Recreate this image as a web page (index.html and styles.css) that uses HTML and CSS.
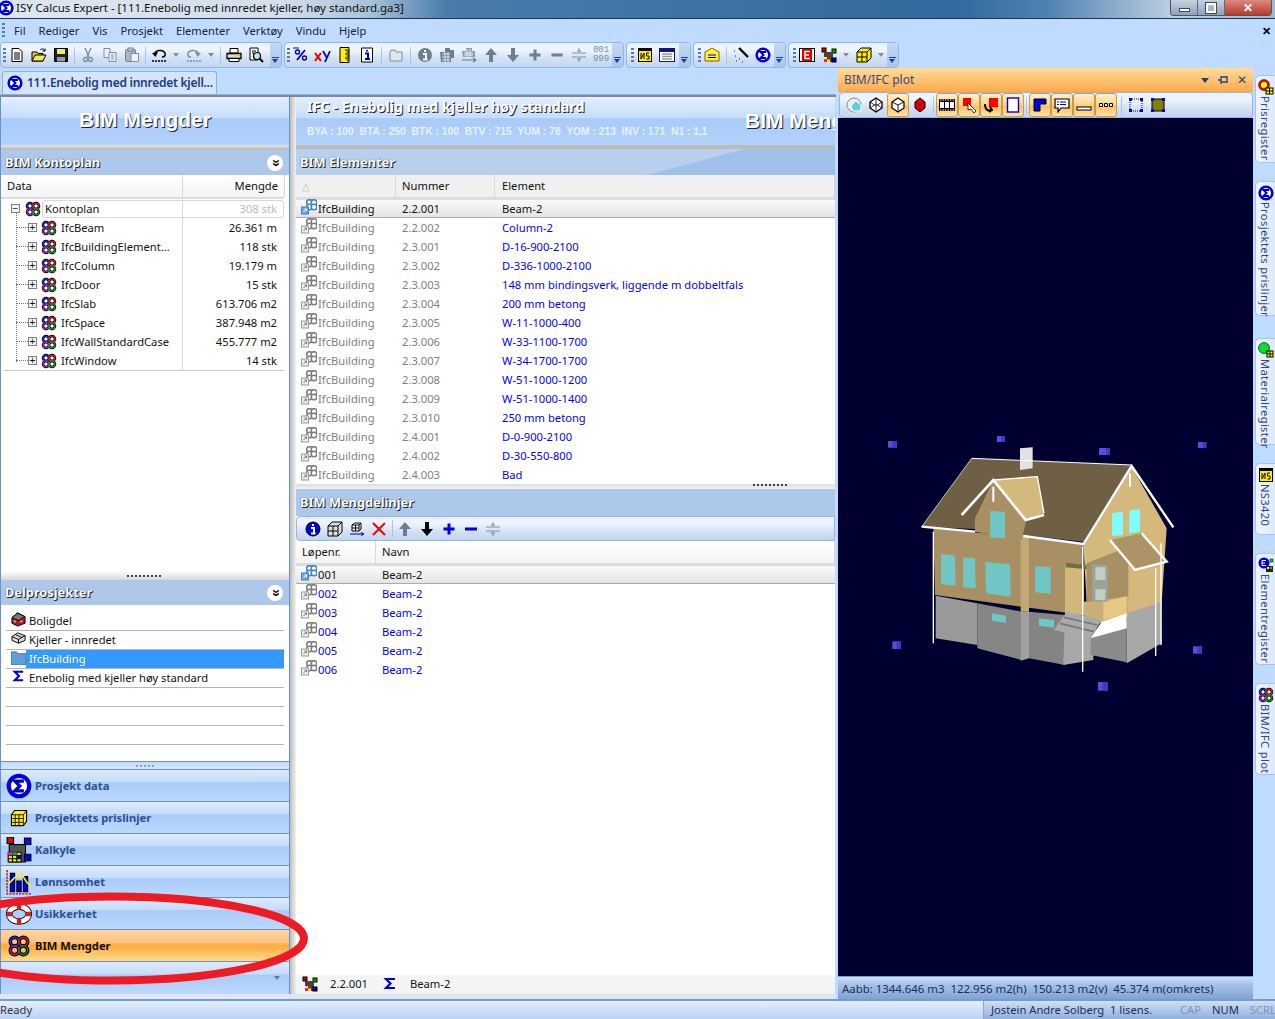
FILE: index.html
```html
<!DOCTYPE html>
<html lang="no">
<head>
<meta charset="utf-8">
<title>ISY Calcus Expert</title>
<link rel="stylesheet" href="styles.css">
</head>
<body>
<svg class="defs" width="0" height="0">
<defs>
<symbol id="sigma" viewBox="0 0 16 16"><circle cx="8" cy="8" r="6.3" fill="#fff" stroke="#0000e0" stroke-width="2.6"/><path d="M11 5H5.5L8.5 8 5.5 11H11" fill="none" stroke="#0000c0" stroke-width="2"/></symbol>
<symbol id="sigmas" viewBox="0 0 16 16"><path d="M13 3H4L8.5 7.5 4 12H13" fill="none" stroke="#0000e0" stroke-width="2.2"/></symbol>
<symbol id="bim" viewBox="0 0 16 16"><g fill="none" stroke="#000" stroke-width="2.5"><circle cx="5" cy="5" r="3"/><circle cx="11" cy="5" r="3"/><circle cx="5" cy="11" r="3"/><circle cx="11" cy="11" r="3"/></g><g fill="none" stroke-width="1.1"><circle cx="5" cy="5" r="3" stroke="#2030e0"/><circle cx="11" cy="5" r="3" stroke="#e02020"/><circle cx="5" cy="11" r="3" stroke="#c020c0"/><circle cx="11" cy="11" r="3" stroke="#10a020"/></g></symbol>
<symbol id="bimn" viewBox="-1 -1 18 18"><g fill="none" stroke="#000" stroke-width="2.5"><circle cx="5" cy="5" r="3"/><circle cx="11" cy="5" r="3"/><circle cx="5" cy="11" r="3"/><circle cx="11" cy="11" r="3"/></g><g fill="none" stroke-width="1.1"><circle cx="5" cy="5" r="3" stroke="#2030e0"/><circle cx="11" cy="5" r="3" stroke="#c02020"/><circle cx="5" cy="11" r="3" stroke="#a020a0"/><circle cx="11" cy="11" r="3" stroke="#108020"/></g></symbol>
<symbol id="bimg" viewBox="0 0 16 16"><g fill="#fff" stroke="#7d7d7d" stroke-width="1.5"><circle cx="8.500" cy="3.500" r="2.800"/><circle cx="13" cy="3.500" r="2.800"/><circle cx="8.500" cy="8" r="2.800"/><circle cx="13" cy="8" r="2.800"/></g><rect x=".5" y="8" width="7" height="7" fill="#eee" stroke="#999"/><path d="M2.500 13L5.500 10M3.500 10H5.500V12" fill="none" stroke="#777"/></symbol>
<symbol id="bims" viewBox="0 0 16 16"><g fill="#fff" stroke="#3f83c4" stroke-width="1.5"><circle cx="8.500" cy="3.500" r="2.800"/><circle cx="13" cy="3.500" r="2.800"/><circle cx="8.500" cy="8" r="2.800"/><circle cx="13" cy="8" r="2.800"/></g><rect x=".5" y="8" width="7" height="7" fill="#6ea8e0" stroke="#3f83c4"/><path d="M2.500 13L5.500 10M3.500 10H5.500V12" fill="none" stroke="#fff"/></symbol>
<symbol id="new" viewBox="0 0 16 16"><path d="M3 1.5H10L13 4.5V14.5H3Z" fill="#fff" stroke="#000"/><path d="M5 6H11M5 8H11M5 10H11M5 12H11" stroke="#000"/></symbol>
<symbol id="open" viewBox="0 0 16 16"><path d="M1 5H6L7 6.500H12V14H1Z" fill="#e0d040" stroke="#000"/><path d="M1 14L4 8H15L12 14Z" fill="#f2e65a" stroke="#000"/><path d="M9 3C11 1 13 2 14 4M14 4V1.500M14 4H11.500" fill="none" stroke="#000"/></symbol>
<symbol id="save" viewBox="0 0 16 16"><path d="M1.500 1.500H14.500V14.500H1.500Z" fill="#222" stroke="#000"/><rect x="4" y="2" width="8" height="5" fill="#f0e870"/><rect x="4" y="10" width="8" height="4.500" fill="#999"/></symbol>
<symbol id="cut" viewBox="0 0 16 16"><path d="M5 1L9 10M11 1L7 10" stroke="#7c8ea6" fill="none" stroke-width="1.400"/><circle cx="5.500" cy="12.500" r="2" fill="none" stroke="#7c8ea6" stroke-width="1.300"/><circle cx="10.500" cy="12.500" r="2" fill="none" stroke="#7c8ea6" stroke-width="1.300"/></symbol>
<symbol id="copy" viewBox="0 0 16 16"><path d="M2 1.500H8V10.500H2Z" fill="#eef2f8" stroke="#7c8ea6"/><path d="M7 5.500H14V14.500H7Z" fill="#eef2f8" stroke="#7c8ea6"/><path d="M9 8H12M9 10H12M9 12H12" stroke="#7c8ea6"/></symbol>
<symbol id="paste" viewBox="0 0 16 16"><rect x="1.500" y="2.500" width="10" height="12" rx="1" fill="#aab6c8" stroke="#6c7e96"/><rect x="4" y="1" width="5" height="3" fill="#ccd" stroke="#6c7e96"/><path d="M7 6.500H14.500V14.500H7Z" fill="#eef2f8" stroke="#7c8ea6"/></symbol>
<symbol id="undo" viewBox="0 0 16 16"><path d="M4 7C4 3 12 2 14 6C15 9 13 10 11 10" fill="none" stroke="#000" stroke-width="1.500"/><path d="M1 6L7 5 4.500 10Z" fill="#000"/><path d="M1 14H15" stroke="#000" stroke-dasharray="2 1" stroke-width="1.500"/></symbol>
<symbol id="redo" viewBox="0 0 16 16"><path d="M12 7C12 3 4 2 2 6C1 9 3 10 5 10" fill="none" stroke="#7c8ea6" stroke-width="1.500"/><path d="M15 6L9 5 11.500 10Z" fill="#7c8ea6"/><path d="M1 14H15" stroke="#7c8ea6" stroke-dasharray="2 1" stroke-width="1.500"/></symbol>
<symbol id="print" viewBox="0 0 16 16"><path d="M4 1.500H12V6H4Z" fill="#fff" stroke="#000"/><path d="M1 6.500H15V11.500H1Z" fill="#d8d8d8" stroke="#000" stroke-width="1.300"/><path d="M3 11.500H13V14.500H3Z" fill="#fff" stroke="#000"/><path d="M11 8H14" stroke="#e8c000" stroke-width="1.500"/></symbol>
<symbol id="preview" viewBox="0 0 16 16"><path d="M2 1H10V13H2Z" fill="#fff" stroke="#000"/><path d="M4 4H8M4 6H6" stroke="#000"/><circle cx="9" cy="9" r="3.500" fill="#bfe4f5" stroke="#000" stroke-width="1.200"/><path d="M11.500 11.500L15 15" stroke="#000" stroke-width="2"/></symbol>
<symbol id="ruler" viewBox="0 0 16 16"><path d="M3 .5H12V15.500H3Z" fill="#ffef00" stroke="#000"/><path d="M8 3H12M9.500 5H12M8 7H12M9.500 9H12M8 11H12M9.500 13H12" stroke="#000"/></symbol>
<symbol id="idoc" viewBox="0 0 16 16"><path d="M2.500 1H13.500V15H2.500Z" fill="#fff" stroke="#000"/><path d="M8 3V4.500M6 6.500H9V11.500M6 12H11" stroke="#0000c0" stroke-width="2" fill="none"/></symbol>
<symbol id="folder" viewBox="0 0 16 16"><path d="M2 5V14H14V5H8L7 3H3Z" fill="#dfe6f0" stroke="#7c8ea6"/></symbol>
<symbol id="infog" viewBox="0 0 16 16"><circle cx="8" cy="8" r="7" fill="#6c7e96"/><path d="M8 3V5M6 7H9V12M6 12.500H10.500" stroke="#fff" stroke-width="2" fill="none"/></symbol>
<symbol id="info" viewBox="0 0 16 16"><circle cx="8" cy="8" r="7" fill="#0000e0" stroke="#000"/><path d="M8 3V5M6 7H9V12M6 12.500H10.500" stroke="#fff" stroke-width="2" fill="none"/></symbol>
<symbol id="cubesg" viewBox="0 0 16 16"><path d="M1 5H6V1H11V3H15V11H12V15H2Z" fill="#6c7e96"/><path d="M3 7H11M3 10H11M3 13H11M6 5V15M9 5V15" stroke="#dfe6f0"/></symbol>
<symbol id="cubesb" viewBox="0 0 16 16"><path d="M1 4H5V1H11V4H14V10H2Z" fill="#8c9cb2"/><path d="M3 6H12M3 8H12M6 2V10M9 2V10" stroke="#eef"/><path d="M1 13H14M12 11L15 13 12 15" fill="none" stroke="#6c7e96" stroke-width="1.200"/></symbol>
<symbol id="boxw" viewBox="0 0 16 16"><path d="M1 5L5 1H15V11L11 15H1Z" fill="#ddd" stroke="#000"/><path d="M1 5H11V15M6 5V15M1 10H11M11 5L15 1" fill="none" stroke="#000"/></symbol>
<symbol id="cubek" viewBox="0 0 16 16"><path d="M3 4L6 2H12V8L10 10H3Z" fill="#fff" stroke="#000"/><path d="M3 4H10V10M6.500 4V10M3 7H10M10 4L12 2" fill="none" stroke="#000"/><path d="M1 13H14M12 11.500L15 13 12 14.500" fill="none" stroke="#0000d0"/></symbol>
<symbol id="up" viewBox="0 0 16 16"><path d="M8 1L14 8H10V15H6V8H2Z" fill="#6c7e96"/></symbol>
<symbol id="down" viewBox="0 0 16 16"><path d="M8 15L14 8H10V1H6V8H2Z" fill="#6c7e96"/></symbol>
<symbol id="plus" viewBox="0 0 16 16"><path d="M6.500 2.500H9.500V6.500H13.500V9.500H9.500V13.500H6.500V9.500H2.500V6.500H6.500Z" fill="#6c7e96"/></symbol>
<symbol id="minus" viewBox="0 0 16 16"><rect x="2.500" y="6.500" width="11" height="3" fill="#6c7e96"/></symbol>
<symbol id="eq" viewBox="0 0 16 16"><path d="M1 6H15M1 10H15M8 1V5M8 11V15M6 3L8 5 10 3M6 13L8 11 10 13" stroke="#7c8ea6" fill="none"/></symbol>
<symbol id="downk" viewBox="0 0 16 16"><path d="M8 15L14 8H10V1H6V8H2Z" fill="#000"/></symbol>
<symbol id="plusb" viewBox="0 0 16 16"><path d="M6.500 2.500H9.500V6.500H13.500V9.500H9.500V13.500H6.500V9.500H2.500V6.500H6.500Z" fill="#0000e0"/></symbol>
<symbol id="minusb" viewBox="0 0 16 16"><rect x="2" y="6.500" width="12" height="3" fill="#0000e0"/></symbol>
<symbol id="delx" viewBox="0 0 16 16"><path d="M2 2L14 14M14 2L2 14" stroke="#e01010" stroke-width="2.200"/></symbol>
<symbol id="win" viewBox="0 0 16 16"><rect x=".5" y="1.500" width="15" height="13" fill="#fff" stroke="#0a1a80"/><rect x="1" y="2" width="14" height="3" fill="#0a1a80"/><path d="M3 7H13M3 9.500H13M3 12H13" stroke="#999" stroke-width="1.500"/></symbol>
<symbol id="mail" viewBox="0 0 16 16"><path d="M1 5L8 1 15 5V14H1Z" fill="#ffef30" stroke="#7a6a00"/><path d="M4 8H12M4 10.500H12" stroke="#0000a0"/></symbol>
<symbol id="wand" viewBox="0 0 16 16"><path d="M6 1L15 10" stroke="#000" stroke-width="2.400"/><path d="M2 9H3M6 12H7M3 14H4M1 4H2M9 15H10" stroke="#0a7ad0" stroke-width="1.500"/></symbol>
<symbol id="cubec" viewBox="0 0 16 16"><rect x="1" y="1" width="4" height="4" fill="#c00" stroke="#000"/><rect x="11" y="2" width="4" height="4" fill="#0a0" stroke="#000"/><rect x="3" y="5" width="9" height="10" fill="#444"/><rect x="3" y="10" width="3" height="2.500" fill="#ff0"/><rect x="6" y="10" width="3" height="2.500" fill="#e00"/><rect x="3" y="12.500" width="3" height="2.500" fill="#e0e"/><rect x="6" y="12.500" width="3" height="2.500" fill="#ff0"/><rect x="11" y="11" width="4" height="4" fill="#00d" stroke="#000"/></symbol>
<symbol id="box" viewBox="0 0 16 16"><path d="M1 5L5 1H15V11L11 15H1Z" fill="#ffef00" stroke="#000"/><path d="M1 5H11V15M6 5V15M1 10H11M11 5L15 1" fill="none" stroke="#000"/></symbol>
<symbol id="wire" viewBox="0 0 16 16"><path d="M8 1L14 5V11L8 15 2 11V5Z" fill="#fff" stroke="#000" stroke-width="1.300"/><path d="M2 5L8 9 14 5M8 9V15M8 1V7M2 11L8 7 14 11" fill="none" stroke="#000" stroke-width=".8"/></symbol>
<symbol id="solid" viewBox="0 0 16 16"><path d="M8 1L14 5V11L8 15 2 11V5Z" fill="#fff" stroke="#000" stroke-width="1.200"/><path d="M2 5L8 8 14 5M8 8V15" fill="none" stroke="#000" stroke-width=".9"/></symbol>
<symbol id="solidr" viewBox="0 0 16 16"><path d="M8 1L13 5V11L8 15 3 11V5Z" fill="#e00000" stroke="#000"/><path d="M3 5L8 8 13 5M8 8V15" fill="none" stroke="#600" stroke-width=".8"/></symbol>
<symbol id="house" viewBox="0 0 16 16"><circle cx="8" cy="8" r="7" fill="#e8eef5" stroke="#889"/><path d="M5 9L10 4 15 8V14H7Z" fill="#5fd0d8" stroke="#fff"/></symbol>
<symbol id="film" viewBox="0 0 16 16"><rect x="0" y="2" width="16" height="12" fill="#000"/><path d="M1 3H15M1 13H15" stroke="#fff" stroke-dasharray="1.500 1"/><rect x="1" y="5" width="4" height="6" fill="#fff"/><rect x="6" y="5" width="4" height="6" fill="#fff"/><rect x="11" y="5" width="4" height="6" fill="#fff"/></symbol>
<symbol id="redarrow" viewBox="0 0 16 16"><rect x="2" y="1" width="8" height="8" fill="#f00"/><path d="M7 6L15 14 13 16 10 12 7 13Z" fill="#fff" stroke="#000" stroke-width=".8"/></symbol>
<symbol id="redturn" viewBox="0 0 16 16"><rect x="6" y="1" width="9" height="9" fill="#f00"/><path d="M2 7C2 14 6 14 9 13M7 10L9 13 6 15" fill="none" stroke="#000" stroke-width="2"/></symbol>
<symbol id="page" viewBox="0 0 16 16"><rect x="2.500" y="1" width="11" height="14" fill="#fff" stroke="#0000e0" stroke-width="1.400"/></symbol>
<symbol id="ell" viewBox="0 0 16 16"><path d="M2 2H14V7H8V14H2Z" fill="#0000e0" stroke="#000"/></symbol>
<symbol id="note" viewBox="0 0 16 16"><path d="M1 2H15V11H7L4 15V11H1Z" fill="#fff" stroke="#000" stroke-width="1.200"/><path d="M3 5H5M6 5H12M3 7.500H5M6 7.500H12" stroke="#0000d0"/></symbol>
<symbol id="bar" viewBox="0 0 16 16"><rect x="1" y="10" width="14" height="3" fill="#fff" stroke="#000"/></symbol>
<symbol id="dots" viewBox="0 0 16 16"><path d="M1.500 6.500H4.500V9.500H1.500ZM6.500 6.500H9.500V9.500H6.500ZM11.500 6.500H14.500V9.500H11.500Z" fill="#fff" stroke="#000"/></symbol>
<symbol id="sel1" viewBox="0 0 16 16"><rect x="2" y="2" width="12" height="12" fill="none" stroke="#000" stroke-dasharray="1 1"/><path d="M1 1H4V4H1ZM12 1H15V4H12ZM1 12H4V15H1ZM12 12H15V15H12Z" fill="#0000e0"/></symbol>
<symbol id="sel2" viewBox="0 0 16 16"><rect x="2" y="2" width="12" height="12" fill="#808000" stroke="#000"/><path d="M1 1H4V4H1ZM12 1H15V4H12ZM1 12H4V15H1ZM12 12H15V15H12Z" fill="#0000e0"/></symbol>
<symbol id="cubey" viewBox="-4 -4 24 24"><path d="M1 5L4 1H15V11L12 15H1Z" fill="#ffef00" stroke="#000"/><path d="M1 5H12V15M4.500 5V15M8 5V15M1 8.500H12M1 12H12M12 5L15 1" fill="none" stroke="#000" stroke-width=".8"/></symbol>
<symbol id="kalk" viewBox="0 0 24 24"><rect x="1" y="0" width="6" height="6" fill="#d01010" stroke="#000"/><rect x="17" y="1" width="6" height="6" fill="#1010d0" stroke="#000"/><rect x="3" y="7" width="15" height="16" fill="#555" stroke="#000"/><path d="M2 14H14V23H2Z" fill="#ffe000" stroke="#000"/><path d="M2 17H14M2 20H14M6 14V23M10 14V23" stroke="#000"/><rect x="2" y="14" width="4" height="3" fill="#e020e0"/><rect x="6" y="14" width="4" height="3" fill="#00b000"/><rect x="10" y="17" width="4" height="3" fill="#0000d0"/><rect x="17" y="16" width="6" height="6" fill="#0000e0" stroke="#000"/></symbol>
<symbol id="chart" viewBox="0 0 24 24"><path d="M1 1V23H24" fill="none" stroke="#c00000" stroke-width="1.300" stroke-dasharray="2 1"/><path d="M4 4H8V21H4ZM10 11H14V21H10ZM16 7H20V21H16Z" fill="#0000e0" stroke="#000"/><path d="M2 14L8 8 14 4 19 12 23 16" fill="none" stroke="#ffef00" stroke-width="1.500"/></symbol>
<symbol id="ring" viewBox="0 0 24 24"><ellipse cx="12" cy="12" rx="9" ry="7" fill="none" stroke="#000" stroke-width="6"/><ellipse cx="12" cy="12" rx="9" ry="7" fill="none" stroke="#fff" stroke-width="4.500"/><path d="M12 2V8M12 16V22M1 12H6M18 12H23" stroke="#d02020" stroke-width="4"/></symbol>
<symbol id="price" viewBox="0 0 16 16"><circle cx="6" cy="6" r="5.500" fill="#e01010" stroke="#000" stroke-width=".5"/><circle cx="6" cy="6" r="3" fill="#ff0"/><rect x="8" y="9" width="7" height="6" fill="#ff0" stroke="#000"/><path d="M11.500 9V15M8 12H15" stroke="#000"/></symbol>
<symbol id="mat" viewBox="0 0 16 16"><circle cx="6" cy="6" r="5.500" fill="#00e030" stroke="#000" stroke-width=".6"/><rect x="9" y="9" width="6" height="6" fill="#ff0" stroke="#000"/><path d="M12 9V15M9 12H15" stroke="#000"/></symbol>
<symbol id="ele" viewBox="0 0 16 16"><circle cx="6" cy="6" r="5.500" fill="#0000e0"/><path d="M4 3.500H8M4 6H7M4 8.500H8M4 3.500V8.500" stroke="#fff"/><rect x="8" y="9" width="7" height="6" fill="#222"/><rect x="9" y="10" width="2" height="2" fill="#ff0"/><rect x="12" y="10" width="2" height="2" fill="#0d0"/><rect x="12" y="2" width="3" height="3" fill="#0d0" stroke="#000" stroke-width=".5"/></symbol>
<symbol id="nsicon" viewBox="0 0 16 16"><rect x="1" y="1" width="14" height="14" fill="#000"/><rect x="2" y="4" width="12" height="10" fill="#ffef00"/><path d="M4 6V12L7 6V12M12 6H9.500V9H12V12H9.500" fill="none" stroke="#000"/></symbol>
<symbol id="eicon" viewBox="0 0 16 16"><rect x=".5" y="1.500" width="15" height="13" fill="#fff" stroke="#000"/><rect x="3" y="2" width="10" height="12" fill="#e00000"/><path d="M11 4.500H6V11.500H11M6 8H10" fill="none" stroke="#fff" stroke-width="1.500"/></symbol>
<symbol id="pct" viewBox="0 0 16 16"><circle cx="4.500" cy="5" r="2" fill="none" stroke="#0000c0" stroke-width="1.400"/><circle cx="11.500" cy="11" r="2" fill="none" stroke="#0000c0" stroke-width="1.400"/><path d="M12 3L4 13" stroke="#0000c0" stroke-width="1.800"/><path d="M0 1H6" stroke="#0000c0"/></symbol>
<symbol id="xy" viewBox="0 0 18 16"><path d="M1 6L7 14M7 6L1 14" stroke="#e00000" stroke-width="2"/><path d="M9 4L13 11M16 4L11 15" stroke="#0000d0" stroke-width="1.800"/></symbol>
<symbol id="hus" viewBox="0 0 16 16"><path d="M1 6L7 1 15 5V12L7 15 1 12Z" fill="#c01818" stroke="#000"/><path d="M1 6L7 1 15 5 8 9Z" fill="#777" stroke="#000"/><rect x="3" y="9" width="2" height="2" fill="#9cf"/><rect x="10" y="9" width="2" height="2" fill="#9cf"/></symbol>
<symbol id="kjel" viewBox="0 0 16 16"><path d="M1 6L7 2 15 5V10L8 13 1 10Z" fill="#ddd" stroke="#000"/><path d="M1 6L8 9 15 5M8 9V13M5 4L12 7" fill="none" stroke="#000"/></symbol>
<symbol id="fold" viewBox="0 0 16 16"><path d="M0 2H6L7 4H16V16H0Z" fill="#5f9fd8" stroke="#3a6ea5"/></symbol>
</defs>
</svg>

<div class="app">
  <header class="titlebar">
    <svg class="ic"><use href="#sigma"/></svg>
    <span class="title-text">ISY Calcus Expert - [111.Enebolig med innredet kjeller, høy standard.ga3]</span>
    <div class="winbtns">
      <span class="wb wb-min"><i class="gl-min"></i></span>
      <span class="wb wb-max"><i class="gl-max"></i></span>
      <span class="wb wb-close">✕</span>
    </div>
  </header>

  <nav class="menubar">
    <span class="grip"></span>
    <span class="mi mi-fil">Fil</span><span class="mi">Rediger</span><span class="mi">Vis</span><span class="mi">Prosjekt</span><span class="mi">Elementer</span><span class="mi">Verktøy</span><span class="mi">Vindu</span><span class="mi">Hjelp</span>
    <span class="menu-close">✕</span>
  </nav>

  <div class="toolbars">
    <div class="tb tb1">
      <span class="grip"></span>
      <span class="b"><svg class="ic"><use href="#new"/></svg></span><span class="b"><svg class="ic"><use href="#open"/></svg></span><span class="b"><svg class="ic"><use href="#save"/></svg></span><span class="sep"></span>
      <span class="b"><svg class="ic"><use href="#cut"/></svg></span><span class="b"><svg class="ic"><use href="#copy"/></svg></span><span class="b"><svg class="ic"><use href="#paste"/></svg></span><span class="sep"></span>
      <span class="b bd"><svg class="ic"><use href="#undo"/></svg><i class="drop"></i></span><span class="b bd"><svg class="ic"><use href="#redo"/></svg><i class="drop"></i></span><span class="sep"></span>
      <span class="b"><svg class="ic"><use href="#print"/></svg></span><span class="b"><svg class="ic"><use href="#preview"/></svg></span>
      <span class="ovf"></span>
    </div>
    <div class="tb tb2">
      <span class="grip"></span>
      <span class="b"><svg class="ic"><use href="#pct"/></svg></span><span class="b"><svg class="ic ic-wide"><use href="#xy"/></svg></span><span class="b"><svg class="ic"><use href="#ruler"/></svg></span><span class="b"><svg class="ic"><use href="#idoc"/></svg></span><span class="sep"></span>
      <span class="b"><svg class="ic"><use href="#folder"/></svg></span><span class="sep"></span>
      <span class="b"><svg class="ic"><use href="#infog"/></svg></span><span class="b"><svg class="ic"><use href="#cubesg"/></svg></span><span class="b"><svg class="ic"><use href="#cubesb"/></svg></span><span class="b"><svg class="ic"><use href="#up"/></svg></span><span class="b"><svg class="ic"><use href="#down"/></svg></span><span class="b"><svg class="ic"><use href="#plus"/></svg></span><span class="b"><svg class="ic"><use href="#minus"/></svg></span><span class="b"><svg class="ic"><use href="#eq"/></svg></span>
      <span class="b num"><span>001</span><span>999</span></span>
      <span class="ovf"></span>
    </div>
    <div class="tb tb3">
      <span class="grip"></span>
      <span class="b"><svg class="ic"><use href="#nsicon"/></svg></span><span class="b"><svg class="ic"><use href="#win"/></svg></span>
      <span class="ovf"></span>
    </div>
    <div class="tb tb4">
      <span class="grip"></span>
      <span class="b"><svg class="ic"><use href="#mail"/></svg></span><span class="sep"></span><span class="b"><svg class="ic"><use href="#wand"/></svg></span><span class="b"><svg class="ic"><use href="#sigma"/></svg></span>
      <span class="ovf"></span>
    </div>
    <div class="tb tb5">
      <span class="grip"></span>
      <span class="b"><svg class="ic"><use href="#eicon"/></svg></span><span class="b bd"><svg class="ic"><use href="#cubec"/></svg><i class="drop"></i></span><span class="b bd"><svg class="ic"><use href="#box"/></svg><i class="drop"></i></span>
      <span class="ovf"></span>
    </div>
  </div>

  <div class="main">
    <div class="doc">
      <div class="tabstrip">
        <div class="doc-tab"><svg class="ic"><use href="#sigma"/></svg><span>111.Enebolig med innredet kjell...</span></div>
      </div>
      <div class="panes">
        <aside class="left">
          <div class="bighead bighead-l"><span class="big">BIM Mengder</span></div>
          <div class="band"></div>
          <div class="sechead"><span>BIM Kontoplan</span><i class="chev">»</i></div>
          <div class="thead tree-cols"><span>Data</span><span class="r">Mengde</span></div>
          <div class="tree">
            <div class="trow root"><span class="exp">−</span><svg class="ic"><use href="#bim"/></svg><span class="tname">Kontoplan</span><span class="tval muted">308 stk</span></div>
            <div class="trow"><span class="exp">+</span><svg class="ic"><use href="#bim"/></svg><span class="tname">IfcBeam</span><span class="tval">26.361 m</span></div>
            <div class="trow"><span class="exp">+</span><svg class="ic"><use href="#bim"/></svg><span class="tname">IfcBuildingElement...</span><span class="tval">118 stk</span></div>
            <div class="trow"><span class="exp">+</span><svg class="ic"><use href="#bim"/></svg><span class="tname">IfcColumn</span><span class="tval">19.179 m</span></div>
            <div class="trow"><span class="exp">+</span><svg class="ic"><use href="#bim"/></svg><span class="tname">IfcDoor</span><span class="tval">15 stk</span></div>
            <div class="trow"><span class="exp">+</span><svg class="ic"><use href="#bim"/></svg><span class="tname">IfcSlab</span><span class="tval">613.706 m2</span></div>
            <div class="trow"><span class="exp">+</span><svg class="ic"><use href="#bim"/></svg><span class="tname">IfcSpace</span><span class="tval">387.948 m2</span></div>
            <div class="trow"><span class="exp">+</span><svg class="ic"><use href="#bim"/></svg><span class="tname">IfcWallStandardCase</span><span class="tval">455.777 m2</span></div>
            <div class="trow"><span class="exp">+</span><svg class="ic"><use href="#bim"/></svg><span class="tname">IfcWindow</span><span class="tval">14 stk</span></div>
          </div>
          <div class="fill"></div>
          <div class="split"><i class="dots9"></i></div>
          <div class="sechead"><span>Delprosjekter</span><i class="chev">»</i></div>
          <div class="dlist">
            <div class="drow"><svg class="ic"><use href="#hus"/></svg><span>Boligdel</span></div>
            <div class="drow"><svg class="ic"><use href="#kjel"/></svg><span>Kjeller - innredet</span></div>
            <div class="drow on"><svg class="ic"><use href="#fold"/></svg><span>IfcBuilding</span></div>
            <div class="drow"><svg class="ic"><use href="#sigmas"/></svg><span>Enebolig med kjeller høy standard</span></div>
            <div class="drow"></div>
            <div class="drow"></div>
            <div class="drow"></div>
          </div>
          <div class="split2"><i class="dots5"></i></div>
          <div class="nav">
            <div class="navb"><svg class="ic24"><use href="#sigma"/></svg><span>Prosjekt data</span></div>
            <div class="navb"><svg class="ic24"><use href="#cubey"/></svg><span>Prosjektets prislinjer</span></div>
            <div class="navb"><svg class="ic24"><use href="#kalk"/></svg><span>Kalkyle</span></div>
            <div class="navb"><svg class="ic24"><use href="#chart"/></svg><span>Lønnsomhet</span></div>
            <div class="navb"><svg class="ic24"><use href="#ring"/></svg><span>Usikkerhet</span></div>
            <div class="navb act"><svg class="ic24"><use href="#bimn"/></svg><span>BIM Mengder</span></div>
            <div class="navb last"><i class="navdrop"></i></div>
          </div>
        </aside>
        <div class="vsplit"></div>
        <section class="center">
          <div class="bighead chead">
            <div class="chead-l">
              <div class="ctitle">IFC - Enebolig med kjeller høy standard</div>
              <div class="cstats">BYA : 100&nbsp; BTA : 250&nbsp; BTK : 100&nbsp; BTV : 715&nbsp; YUM : 78&nbsp; YOM : 213&nbsp; INV : 171&nbsp; N1 : 1,1</div>
            </div>
            <span class="big bigc">BIM Mengder</span>
          </div>
          <div class="sechead sechead-c"><span>BIM Elementer</span></div>
          <div class="thead el-cols grey"><span class="sort">△</span><span>Nummer</span><span>Element</span></div>
          <div class="rows">
            <div class="row el-cols sel"><svg class="ic"><use href="#bims"/></svg><span>IfcBuilding</span><span>2.2.001</span><span>Beam-2</span></div>
            <div class="row el-cols"><svg class="ic"><use href="#bimg"/></svg><span class="g">IfcBuilding</span><span class="g">2.2.002</span><span class="l">Column-2</span></div>
            <div class="row el-cols"><svg class="ic"><use href="#bimg"/></svg><span class="g">IfcBuilding</span><span class="g">2.3.001</span><span class="l">D-16-900-2100</span></div>
            <div class="row el-cols"><svg class="ic"><use href="#bimg"/></svg><span class="g">IfcBuilding</span><span class="g">2.3.002</span><span class="l">D-336-1000-2100</span></div>
            <div class="row el-cols"><svg class="ic"><use href="#bimg"/></svg><span class="g">IfcBuilding</span><span class="g">2.3.003</span><span class="l">148 mm bindingsverk, liggende m dobbeltfals</span></div>
            <div class="row el-cols"><svg class="ic"><use href="#bimg"/></svg><span class="g">IfcBuilding</span><span class="g">2.3.004</span><span class="l">200 mm betong</span></div>
            <div class="row el-cols"><svg class="ic"><use href="#bimg"/></svg><span class="g">IfcBuilding</span><span class="g">2.3.005</span><span class="l">W-11-1000-400</span></div>
            <div class="row el-cols"><svg class="ic"><use href="#bimg"/></svg><span class="g">IfcBuilding</span><span class="g">2.3.006</span><span class="l">W-33-1100-1700</span></div>
            <div class="row el-cols"><svg class="ic"><use href="#bimg"/></svg><span class="g">IfcBuilding</span><span class="g">2.3.007</span><span class="l">W-34-1700-1700</span></div>
            <div class="row el-cols"><svg class="ic"><use href="#bimg"/></svg><span class="g">IfcBuilding</span><span class="g">2.3.008</span><span class="l">W-51-1000-1200</span></div>
            <div class="row el-cols"><svg class="ic"><use href="#bimg"/></svg><span class="g">IfcBuilding</span><span class="g">2.3.009</span><span class="l">W-51-1000-1400</span></div>
            <div class="row el-cols"><svg class="ic"><use href="#bimg"/></svg><span class="g">IfcBuilding</span><span class="g">2.3.010</span><span class="l">250 mm betong</span></div>
            <div class="row el-cols"><svg class="ic"><use href="#bimg"/></svg><span class="g">IfcBuilding</span><span class="g">2.4.001</span><span class="l">D-0-900-2100</span></div>
            <div class="row el-cols"><svg class="ic"><use href="#bimg"/></svg><span class="g">IfcBuilding</span><span class="g">2.4.002</span><span class="l">D-30-550-800</span></div>
            <div class="row el-cols"><svg class="ic"><use href="#bimg"/></svg><span class="g">IfcBuilding</span><span class="g">2.4.003</span><span class="l">Bad</span></div>
          </div>
          <div class="hsplit"><i class="dots9"></i></div>
          <div class="sechead sechead-m"><span>BIM Mengdelinjer</span></div>
          <div class="tb tb-m">
            <span class="b"><svg class="ic"><use href="#info"/></svg></span><span class="b"><svg class="ic"><use href="#boxw"/></svg></span><span class="b"><svg class="ic"><use href="#cubek"/></svg></span><span class="b"><svg class="ic"><use href="#delx"/></svg></span><span class="sep"></span>
            <span class="b"><svg class="ic"><use href="#up"/></svg></span><span class="b"><svg class="ic"><use href="#downk"/></svg></span><span class="b"><svg class="ic"><use href="#plusb"/></svg></span><span class="b"><svg class="ic"><use href="#minusb"/></svg></span><span class="b"><svg class="ic"><use href="#eq"/></svg></span>
          </div>
          <div class="thead ml-cols"><span>Løpenr.</span><span>Navn</span></div>
          <div class="rows">
            <div class="row ml-cols sel"><svg class="ic"><use href="#bims"/></svg><span>001</span><span>Beam-2</span></div>
            <div class="row ml-cols"><svg class="ic"><use href="#bimg"/></svg><span class="l">002</span><span class="l">Beam-2</span></div>
            <div class="row ml-cols"><svg class="ic"><use href="#bimg"/></svg><span class="l">003</span><span class="l">Beam-2</span></div>
            <div class="row ml-cols"><svg class="ic"><use href="#bimg"/></svg><span class="l">004</span><span class="l">Beam-2</span></div>
            <div class="row ml-cols"><svg class="ic"><use href="#bimg"/></svg><span class="l">005</span><span class="l">Beam-2</span></div>
            <div class="row ml-cols"><svg class="ic"><use href="#bimg"/></svg><span class="l">006</span><span class="l">Beam-2</span></div>
          </div>
          <div class="fill"></div>
          <div class="cfoot"><svg class="ic"><use href="#cubec"/></svg><span class="cf1">2.2.001</span><svg class="ic"><use href="#sigmas"/></svg><span class="cf2">Beam-2</span></div>
        </section>
      </div>
    </div>

    <section class="plot">
      <div class="plot-title"><span>BIM/IFC plot</span>
        <div class="plot-ctrl"><i class="tri"></i><svg class="pin" viewBox="0 0 12 12"><path d="M1 6H4M4 2V10M4 3H10V8H4M10 2V9" fill="none" stroke="#233f8c" stroke-width="1.300"/></svg><span class="px">✕</span></div>
      </div>
      <div class="tb tb-p">
        <span class="b"><svg class="ic"><use href="#house"/></svg></span><span class="b"><svg class="ic"><use href="#wire"/></svg></span><span class="b a"><svg class="ic"><use href="#solid"/></svg></span><span class="b"><svg class="ic"><use href="#solidr"/></svg></span><span class="sep"></span>
        <span class="b a"><svg class="ic"><use href="#film"/></svg></span><span class="b a"><svg class="ic"><use href="#redarrow"/></svg></span><span class="b a"><svg class="ic"><use href="#redturn"/></svg></span><span class="b a"><svg class="ic"><use href="#page"/></svg></span><span class="sep"></span>
        <span class="b a"><svg class="ic"><use href="#ell"/></svg></span><span class="b a"><svg class="ic"><use href="#note"/></svg></span><span class="b a"><svg class="ic"><use href="#bar"/></svg></span><span class="b a"><svg class="ic"><use href="#dots"/></svg></span><span class="sep sep-wide"></span>
        <span class="b"><svg class="ic"><use href="#sel1"/></svg></span><span class="b"><svg class="ic"><use href="#sel2"/></svg></span>
      </div>
      <div class="view">
        <svg class="house3d" viewBox="0 0 990 810" width="330" height="270">
          <g fill="#5050dd"><rect x="24" y="33" width="27" height="20"/><rect x="351" y="18" width="24" height="18"/><rect x="657" y="54" width="33" height="21"/><rect x="954" y="36" width="25" height="18"/><rect x="37" y="634" width="26" height="23"/><rect x="939" y="649" width="27" height="22"/><rect x="654" y="756" width="30" height="26"/></g>
          <g fill="#3c3cc0"><rect x="37" y="33" width="14" height="20"/><rect x="363" y="18" width="12" height="18"/><rect x="678" y="54" width="12" height="21"/><rect x="968" y="36" width="11" height="18"/><rect x="50" y="634" width="13" height="23"/><rect x="952" y="649" width="14" height="22"/><rect x="668" y="756" width="16" height="26"/></g>
          <path d="M167 497L292 520V645L167 625Z" fill="#9a9a9a"/>
          <path d="M292 520L425 545V690L292 655Z" fill="#868686"/>
          <path d="M422 545H447V685L422 692Z" fill="#a0a0a0"/>
          <path d="M447 545L555 555V705L447 685Z" fill="#848484"/>
          <path d="M555 555L640 560V690L550 705Z" fill="#a8a8a8"/>
          <path d="M632 600L740 580V697L632 675Z" fill="#8a8a8a"/>
          <path d="M740 545L845 510V640L740 700Z" fill="#a8a8a8"/>
          <path d="M160 295L610 340V555L165 495Z" fill="#a89064"/>
          <path d="M555 400L612 405V555H555Z" fill="#d2b77c"/>
          <path d="M422 275L447 290V545H422Z" fill="#c4a873"/>
          <path d="M610 345L755 110 860 295 845 515 740 550V500L620 515Z" fill="#d4b87c"/>
          <path d="M612 515L745 498V560L665 580 612 560Z" fill="#c9ae75"/>
          <path d="M620 400L745 350V500L620 515Z" fill="#a89064"/>
          <path d="M670 515L740 498V550L670 570Z" fill="#e6c887"/>
          <path d="M557 398L620 405V418L557 412Z" fill="#6f7040"/>
          <path d="M125 290L275 85 755 105 610 335 430 315 285 297Z" fill="#6e5f45"/>
          <path d="M285 265L340 150 440 265 425 330 285 305Z" fill="#a89064"/>
          <path d="M340 150L472 140 492 250 435 270Z" fill="#d4b87c"/>
          <path d="M690 330L785 310 860 395 765 420Z" fill="#ad9466"/>
          <path d="M635 403L683 405V515L637 515Z" fill="#9aa59a"/>
          <path d="M646 412H676V450H646ZM646 478H676V510H646Z" fill="#c4ccc4"/>
          <g fill="#6fc6c4"><path d="M330 243L375 245V325L330 322Z"/><path d="M183 372L225 377 227 467 183 462Z"/><path d="M250 382L285 385 287 475 250 472Z"/><path d="M316 396L390 403 392 500 318 490Z"/><path d="M466 408L512 412V491L466 487Z"/><path d="M336 550L378 557V579L336 572Z"/><path d="M477 565L522 570V593L477 587Z"/></g>
          <g fill="#7ffcfc"><path d="M696 250L729 244V315L696 318Z"/><path d="M749 240L780 237V305L747 310Z"/></g>
          <path d="M420 55L458 52V115L420 120Z" fill="#e2e2e2"/>
          <path d="M632 625L665 575 740 550V595Z" fill="#fff"/>
          <path d="M560 545L665 570 632 625 522 600Z" fill="#aaa"/>
          <path d="M552 562L652 585M540 580L642 605" stroke="#777" stroke-width="5" fill="none"/>
          <g fill="none" stroke="#fff" stroke-linejoin="miter">
            <path d="M125 290L285 305" stroke-width="7"/>
            <path d="M430 318L610 342 755 108 880 292" stroke-width="7"/>
            <path d="M275 85L755 105" stroke-width="3"/>
            <path d="M125 290L275 85" stroke-width="2"/>
            <path d="M245 255L340 150 437 270 492 255" stroke-width="8"/>
            <path d="M340 150L472 140 492 250" stroke-width="4"/>
            <path d="M690 330L765 420 860 395 785 310" stroke-width="7"/>
            <path d="M160 305V640M608 350V725M827 415V678M843 340V645" stroke-width="4"/>
            <path d="M340 170V215M750 130V170" stroke-width="6"/>
          </g>
        </svg>
      </div>
      <div class="plot-status">Aabb: 1344.646 m3&nbsp;&nbsp;122.956 m2(h)&nbsp;&nbsp;150.213 m2(v)&nbsp;&nbsp;45.374 m(omkrets)</div>
    </section>

    <aside class="vtabs">
      <div class="vt vt1"><svg class="ic"><use href="#price"/></svg><span>Prisregister</span></div>
      <div class="vt vt2"><svg class="ic"><use href="#sigma"/></svg><span>Prosjektets prislinjer</span></div>
      <div class="vt vt3"><svg class="ic"><use href="#mat"/></svg><span>Materialregister</span></div>
      <div class="vt vt4"><svg class="ic"><use href="#nsicon"/></svg><span>NS3420</span></div>
      <div class="vt vt5"><svg class="ic"><use href="#ele"/></svg><span>Elementregister</span></div>
      <div class="vt vt6"><svg class="ic"><use href="#bim"/></svg><span>BIM/IFC plot</span></div>
    </aside>
  </div>

  <footer class="statusbar">
    <span class="st-ready">Ready</span>
    <span class="st-user">Jostein Andre Solberg&nbsp; 1 lisens.</span>
    <span class="st-k dim">CAP</span><span class="st-k">NUM</span><span class="st-k dim">SCRL</span>
  </footer>

  <svg class="annot" viewBox="0 0 1275 1019" width="1275" height="1019"><ellipse cx="112" cy="938.500" rx="192" ry="42" fill="none" stroke="#ed1c24" stroke-width="8"/></svg>
</div>
</body>
</html>
```

FILE: styles.css
```css
* { box-sizing: border-box; }
html, body { margin: 0; padding: 0; }
body { width: 1275px; height: 1019px; overflow: hidden; font: 11.2px/1 "Noto Sans", Tahoma, sans-serif; color: #111; background: #bfdbff; }
.defs { position: absolute; }
.app { position: relative; width: 1275px; height: 1019px; display: flex; flex-direction: column; overflow: hidden; }
.ic { width: 16px; height: 16px; flex: none; display: block; }
.ic-wide { width: 18px; }
.ic24 { width: 26px; height: 26px; flex: none; display: block; }
.fill { flex: 1; min-height: 0; }

/* title bar */
.titlebar { height: 19px; flex: none; display: flex; align-items: center; padding-bottom: 2px; border-bottom: 1px solid #20324a; background: linear-gradient(90deg, #dde6f0 0, #d4dfec 22%, #a9c2da 29%, #4a7bab 35%, #34699f 75%, #4f81b2 82%, #bcd0e2 92%, #9fb8d0 100%); }
.titlebar .ic { margin-left: -2px; }
.title-text { margin-left: 2px; font-size: 11.450px; color: #111; }
.winbtns { margin-left: auto; margin-right: 3px; display: flex; height: 16px; align-self: flex-start; border: 1px solid #44576c; border-top: 0; border-radius: 0 0 4px 4px; overflow: hidden; }
.wb { display: flex; align-items: center; justify-content: center; background: linear-gradient(#c6d3e0, #8ba2ba); border-right: 1px solid #5b6f84; width: 27px; }
.wb-close { width: 46px; border: 0; color: #fff; font-size: 12px; font-weight: bold; background: linear-gradient(#d98a7e, #bb3a2a); }
.gl-min { width: 11px; height: 4px; margin-top: 5px; background: #fff; border: 1px solid #445; }
.gl-max { width: 10px; height: 10px; background: transparent; border: 2px solid #fff; outline: 1px solid #445; }

/* menu */
.menubar { height: 23px; flex: none; display: flex; align-items: center; background: #bfdbff; position: relative; }
.menubar .grip { margin: 0 0 0 2px; }
.mi { font-size: 11.2px; color: #15233c; margin-right: 13px; }
.mi-fil { margin-left: 9px; }
.menu-close { margin-left: auto; margin-right: 4px; font-size: 11px; color: #000; font-weight: bold; }
.grip { display: block; flex: none; width: 3px; height: 15px; margin: 0 0 0 2px; background: repeating-linear-gradient(#4f7dbd 0 2px, transparent 2px 4px); }

/* toolbars */
.toolbars { height: 26px; flex: none; display: flex; gap: 2px; background: #bfdbff; }
.tb { position: relative; display: flex; align-items: center; height: 26px; flex: none; background: linear-gradient(#e6f0fc 0, #f0f5fc 25%, #d2e0f3 65%, #c3d6ef 100%); border: 1px solid #94b6e4; border-radius: 4px; }
.tb1 { width: 282px; }
.tb2 { width: 340px; }
.tb3 { width: 65px; padding-left: 2px; }
.tb4 { width: 93px; padding-left: 2px; }
.tb5 { width: 111px; padding-left: 2px; }
.b { width: 22px; height: 24px; display: flex; flex: none; align-items: center; justify-content: center; }
.bd { width: 35px; justify-content: flex-start; padding-left: 3px; }
.drop { display: block; width: 0; height: 0; margin-left: 6px; border: 3px solid transparent; border-top: 4px solid #7c8ea6; border-bottom: 0; }
.sep { flex: none; width: 1px; height: 17px; margin: 0 2px; background: #a9c4e6; }
.tb2 .sep, .tb4 .sep { margin: 0 3px; }
.sep-wide { margin: 0 3px 0 4px; }
.num { flex-direction: column; font: 9px/9px "Liberation Mono", monospace; color: #7c8ea6; }
.ovf { position: absolute; right: 0; top: 0; bottom: 0; width: 11px; border-radius: 0 3px 3px 0; background: linear-gradient(#c3d8f3, #a9c6ea); }
.ovf::after { content: ""; position: absolute; left: 2px; bottom: 4px; width: 0; height: 0; border: 3.500px solid transparent; border-top: 4px solid #1c3f94; border-bottom: 0; }
.ovf::before { content: ""; position: absolute; left: 2px; bottom: 9px; width: 7px; height: 1px; background: #1c3f94; }

/* layout */
.main { flex: 1; min-height: 0; display: flex; }
.doc { width: 836px; flex: none; display: flex; flex-direction: column; }
.tabstrip { height: 27px; flex: none; padding: 3px 0 0 2px; background: #bfdbff; border-bottom: 1px solid #8fb0da; }
.doc-tab { width: 215px; height: 23px; display: flex; align-items: center; gap: 4px; padding-left: 4px; background: #d4e5fb; border: 1px solid #8fb0da; border-bottom: 0; border-radius: 3px 3px 0 0; color: #1c3a80; font-size: 12px; font-weight: 600; white-space: nowrap; letter-spacing: -.25px; }
.panes { flex: 1; min-height: 0; display: flex; border-top: 2px solid #7f8a96; border-bottom: 5px solid #dfe6ef; }
.left { width: 290px; flex: none; display: flex; flex-direction: column; background: #fff; border-left: 1px solid #6593cf; border-right: 1px solid #6593cf; }
.vsplit { width: 6px; flex: none; background: linear-gradient(90deg, #bbb, #d8d8d8 50%, #f0f0f0); }
.center { width: 539px; flex: none; display: flex; flex-direction: column; background: #fff; }

.bighead { height: 48px; flex: none; display: flex; align-items: center; justify-content: center; position: relative; background: linear-gradient(#e3eefe 0, #c6dcfb 44%, #a9cbf9 45%, #b3d2fb 100%); overflow: hidden; }
.bighead-l { padding-bottom: 4px; }
.big { font: bold 21px/1 "Liberation Sans", sans-serif; color: #fff; text-shadow: 1px 1px 0 #222; }
.band { height: 5px; flex: none; background: linear-gradient(#e8e8e8, #b3b3b3); }
.sechead { height: 25px; flex: none; display: flex; align-items: center; justify-content: space-between; padding: 0 6px 0 4px; background: #adc8ea; font-weight: bold; font-size: 12.800px; color: #fff; text-shadow: 1px 1px 0 #222, 0 0 1px #333; }
.chev { width: 16px; height: 16px; border-radius: 50%; background: #fff; color: #111; text-shadow: none; font: bold 14px/12px "Liberation Sans", sans-serif; text-align: center; transform: rotate(90deg); }
.thead { height: 24px; flex: none; display: grid; align-items: center; font-size: 11.2px; background: linear-gradient(#fff, #f4f4f4); border-bottom: 2px solid #dcdcdc; }
.tree-cols { grid-template-columns: 177px 102px; padding-left: 5px; width: 283px; }
.thead span { height: 100%; display: flex; align-items: center; border-right: 1px solid #d8d8d8; padding-left: 1px; }
.thead .r { justify-content: flex-end; padding-right: 6px; }

.tree { width: 280px; margin-left: 3px; position: relative; background: linear-gradient(90deg, transparent 178px, #d8d8d8 178px, #d8d8d8 179px, transparent 179px); border-bottom: 1px solid #ccc; padding-bottom: 0; }
.tree::before { content: ""; position: absolute; left: 12px; top: 14px; bottom: 8px; border-left: 1px dotted #777; }
.trow { height: 19px; display: flex; align-items: center; position: relative; padding-left: 24px; }
.trow::before { content: ""; position: absolute; left: 12px; top: 9px; width: 12px; border-top: 1px dotted #777; }
.trow.root::before { display: none; }
.trow.root { padding-left: 7px; }
.exp { position: relative; width: 9px; height: 9px; flex: none; margin-right: 3px; font: 10px/7px "Liberation Sans", sans-serif; text-align: center; background: #f4f4f4; border: 1px solid #808080; }
.trow .ic { margin-left: 1px; }
.root .ic { margin-left: 2px; }
.tname { margin-left: 4px; white-space: nowrap; }
.root .tname { padding: 3px 0; }
.tval { margin-left: auto; margin-right: 7px; }
.muted { color: #bbb; }
.root::after { content: ""; position: absolute; left: 38px; right: 0; top: 1px; bottom: 0; border: 1px solid #d8d8d8; border-radius: 3px; z-index: 0; }

.split { height: 9px; flex: none; display: flex; justify-content: center; align-items: center; background: linear-gradient(#fff, #d8d8d8); }
.dots9 { width: 36px; height: 2px; background: repeating-linear-gradient(90deg, #444 0 2px, transparent 2px 4px); }
.dots5 { width: 19px; height: 2px; background: repeating-linear-gradient(90deg, #8aa0c0 0 2px, transparent 2px 4px); }
.dlist { padding: 7px 5px 16px 5px; flex: none; }
.drow { height: 19px; display: flex; align-items: center; border-bottom: 1px solid #b5b5b5; padding-left: 5px; gap: 3px; }
.drow .ic { width: 15px; height: 15px; margin-top: -3px; }
.drow.on { background: linear-gradient(90deg, #fff 20px, #3399ff 20px); color: #fff; }
.split2 { height: 8px; flex: none; display: flex; justify-content: center; align-items: center; background: linear-gradient(#c4daf8, #d8e7fb); border-top: 1px solid #6593cf; }
.nav { flex: none; }
.navb { height: 32px; display: flex; align-items: center; gap: 3px; padding-left: 5px; border-top: 1px solid #6593cf; background: linear-gradient(#dcebfe 0, #c6dcfb 38%, #a9cbf9 40%, #bcd8fd 100%); font-weight: bold; font-size: 11.2px; color: #2e4f90; }
.navb.act { color: #111; background: linear-gradient(#fdd5a4 0, #ffc57f 38%, #ffaa3c 50%, #fddc8e 100%); }
.navb.last { height: 33px; justify-content: flex-end; padding-right: 9px; }
.navdrop { display: block; width: 0; height: 0; border: 3px solid transparent; border-top: 4px solid #5a7ab0; border-bottom: 0; }

/* center */
.chead { justify-content: flex-start; }
.chead-l { padding-left: 11px; }
.ctitle { font-weight: bold; font-size: 14.300px; color: #fff; text-shadow: 1px 1px 0 #222; margin-top: -5px; }
.cstats { margin-top: 12px; font: bold 10.300px/1 "Liberation Sans", sans-serif; color: #e9f1fc; white-space: pre; }
.bigc { position: absolute; left: 449px; top: 13px; white-space: nowrap; }
.sechead-c { height: 30px; border-top: 4px solid #bbb; background: linear-gradient(165deg, #b8d0ee 0, #b8d0ee 70%, #9fc0e8 71%); }
.el-cols { grid-template-columns: 100px 99px 1fr; }
.thead.el-cols { background: #f0f0f0; }
.thead.el-cols span { padding-left: 6px; }
.thead.el-cols span:last-child { padding-left: 7px; }
.sort { color: #bbb; font-size: 10px; }
.rows { flex: none; }
.row { height: 19px; display: grid; align-items: center; position: relative; padding-left: 5px; }
.row.el-cols { grid-template-columns: 17px 84px 100px 1fr; }
.row .ic { margin-top: -4px; }
.row.sel { background: linear-gradient(#fafafa, #e4e4e4); border-bottom: 1px solid #aaa; border-top: 1px solid #ddd; }
.g { color: #808080; }
.l { color: #0000ff; }
.hsplit { height: 5px; flex: none; display: flex; justify-content: flex-end; padding-right: 46px; background: linear-gradient(#ddd, #f4f4f4); }
.sechead-m { height: 27px; }
.tb-m { width: 539px; height: 25px; padding-left: 5px; border-radius: 4px 0 0 4px; }
.tb-m .sep { margin: 0 1px 0 2px; }
.ml-cols { grid-template-columns: 80px 1fr; }
.thead.ml-cols { height: 24px; }
.thead.ml-cols span { padding-left: 6px; }
.row.ml-cols { grid-template-columns: 17px 64px 1fr; }
.cfoot { height: 19px; flex: none; display: flex; align-items: center; padding: 0 0 2px 6px; background: #f4f4f4; }
.cf1 { margin: 0 19px 0 12px; width: 33px; }
.cf2 { margin-left: 12px; }

/* plot */
.plot { width: 415px; flex: none; margin-left: 2px; display: flex; flex-direction: column; }
.plot-title { height: 24px; flex: none; display: flex; align-items: center; justify-content: space-between; padding: 0 6px; color: #344a86; font-size: 12px; background: linear-gradient(#ffdd9a, #ffa84a); }
.plot-ctrl { display: flex; align-items: center; gap: 8px; }
.tri { display: block; width: 0; height: 0; border: 4px solid transparent; border-top: 5px solid #233f8c; border-bottom: 0; }
.pin { width: 12px; height: 12px; }
.px { color: #233f8c; font-size: 12px; }
.tb-p { width: 414px; height: 26px; padding-left: 3px; margin-left: 1px; }
.b.a { border: 1px solid #c49a55; border-radius: 3px; background: linear-gradient(#fff0cc, #ffd38a 50%, #ffbe60 55%, #ffe4a0); }
.view { flex: 1; min-height: 0; position: relative; background: #000030; }
.house3d { position: absolute; left: 42px; top: 312px; }
.plot-status { height: 23px; flex: none; display: flex; align-items: center; padding: 2px 0 0 4px; color: #1c2d5c; font-size: 11.400px; background: linear-gradient(#cfe0f7, #a8c5ea 30%, #7fa3d4); border-top: 1px solid #7a9bc9; white-space: nowrap; }

/* right tabs */
.vtabs { flex: 1; display: flex; flex-direction: column; align-items: flex-end; padding-top: 7px; gap: 18px; }
.vt { width: 20px; display: flex; flex-direction: column; align-items: center; padding-top: 3px; gap: 1px; background: linear-gradient(90deg, #eff5fd, #dde9f9); border: 1px solid #a8c4ea; border-right: 0; border-radius: 5px 0 0 5px; }
.vt span { writing-mode: vertical-rl; font-size: 11.2px; color: #2c4788; letter-spacing: .35px; white-space: nowrap; }
.vt1 { height: 88px; }
.vt2 { height: 135px; }
.vt3 { height: 107px; margin-top: 4px; }
.vt4 { height: 72px; }
.vt5 { height: 112px; }
.vt6 { height: 92px; }

/* status */
.statusbar { height: 20px; flex: none; display: flex; align-items: center; border-top: 2px solid #7a9bc9; background: linear-gradient(#e4effd, #b7d2f7); font-size: 11.2px; color: #333; }
.st-ready { width: 983px; flex: none; }
.st-user { display: flex; align-items: center; align-self: stretch; width: 189px; padding-left: 7px; color: #1c2d5c; background: linear-gradient(#cfe0f7, #8fb0de); border-left: 1px solid #88a6d0; flex: none; white-space: nowrap; }
.st-k { display: flex; align-items: center; align-self: stretch; padding: 0 3px 0 8px; color: #1c2d5c; background: linear-gradient(#cfe0f7, #8fb0de); flex: none; }
.st-k:last-child { flex: 1; }
.st-k.dim { color: #7f93b3; }

.annot { position: absolute; left: 0; top: 0; pointer-events: none; }
```
